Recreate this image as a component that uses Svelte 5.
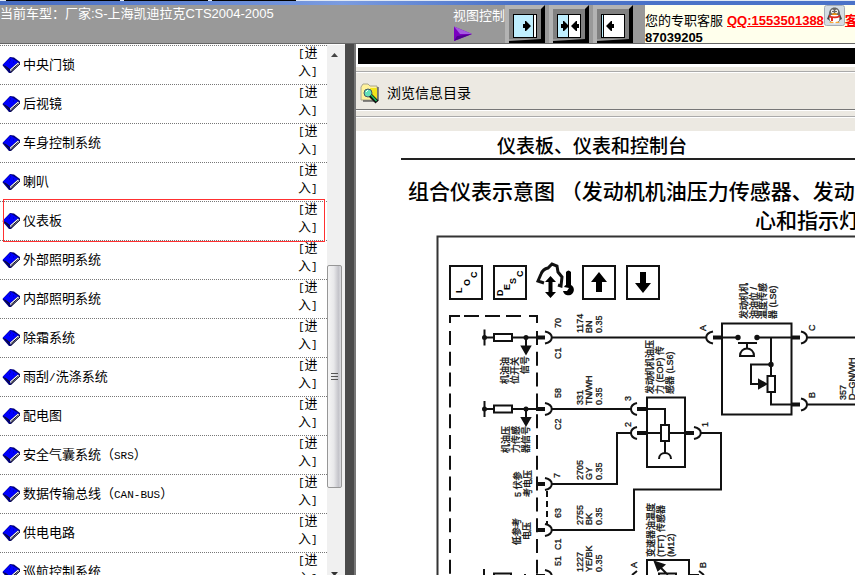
<script lang="ts">
  interface Label {
    x: number;
    y: number;
    text: string;
  }

  let items = [
    '中央门锁',
    '后视镜',
    '车身控制系统',
    '喇叭',
    '仪表板',
    '外部照明系统',
    '内部照明系统',
    '除霜系统',
    '雨刮/洗涤系统',
    '配电图',
    '安全气囊系统（SRS）',
    '数据传输总线（CAN-BUS）',
    '供电电路',
    '巡航控制系统'
  ];

  let selected = $state('仪表板');

  // labels on the drawing run bottom to top; x is the baseline, y the first letter
  const labels: Label[] = [
    { x: 561, y: 328, text: '70' },
    { x: 561, y: 359, text: 'C1' },
    { x: 583, y: 333, text: '1174' },
    { x: 592, y: 333, text: 'BN' },
    { x: 602, y: 333, text: '0.35' },
    { x: 561, y: 398, text: '58' },
    { x: 561, y: 430, text: 'C2' },
    { x: 583, y: 405, text: '331' },
    { x: 592, y: 405, text: 'TN/WH' },
    { x: 602, y: 405, text: '0.35' },
    { x: 560, y: 478, text: '7' },
    { x: 583, y: 480, text: '2705' },
    { x: 592, y: 480, text: 'GY' },
    { x: 602, y: 480, text: '0.35' },
    { x: 561, y: 518, text: '63' },
    { x: 583, y: 525, text: '2755' },
    { x: 592, y: 525, text: 'BK' },
    { x: 602, y: 525, text: '0.35' },
    { x: 561, y: 550, text: 'C1' },
    { x: 561, y: 566, text: '51' },
    { x: 583, y: 572, text: '1227' },
    { x: 592, y: 572, text: 'YE/BK' },
    { x: 602, y: 572, text: '0.35' },
    { x: 631, y: 401, text: '3' },
    { x: 631, y: 427, text: '2' },
    { x: 708, y: 427, text: '1' },
    { x: 706, y: 331, text: 'A' },
    { x: 815, y: 331, text: 'C' },
    { x: 815, y: 398, text: 'B' },
    { x: 846, y: 400, text: '357' },
    { x: 855, y: 400, text: 'D–GN/WH' },
    { x: 637, y: 568, text: 'A' },
    { x: 706, y: 568, text: 'B' },
    { x: 508, y: 384, text: '机油油' },
    { x: 518, y: 384, text: '位开关' },
    { x: 528, y: 374, text: '信号' },
    { x: 509, y: 453, text: '机油压' },
    { x: 519, y: 453, text: '力传感' },
    { x: 529, y: 453, text: '器信号' },
    { x: 521, y: 497, text: '5 伏参' },
    { x: 531, y: 497, text: '考电压' },
    { x: 520, y: 545, text: '低参考' },
    { x: 530, y: 540, text: '电压' },
    { x: 747, y: 319, text: '发动机机' },
    { x: 757, y: 319, text: '油油位 /' },
    { x: 766, y: 319, text: '温度传感' },
    { x: 776, y: 319, text: '器 (LS6)' },
    { x: 653, y: 394, text: '发动机机油压' },
    { x: 663, y: 394, text: '力 (EOP) 传' },
    { x: 673, y: 394, text: '感器 (LS6)' },
    { x: 654, y: 557, text: '变速器油温度' },
    { x: 664, y: 557, text: '(TFT) 传感器' },
    { x: 674, y: 557, text: '(M12)' }
  ];

  const views = [
    { name: '左侧展开', split: 21, fill: 21, right: 9, left: -1 },
    { name: '左右平分', split: 12, fill: 12, right: 3, left: 14 },
    { name: '右侧展开', split: 3, fill: 3, right: -1, left: 5 }
  ];

  // latin runs are set narrower than the ideographs
  function split(text: string) {
    return text.split(/([\x21-\x7e]+)/).filter(Boolean);
  }
</script>

{#snippet mixed(text: string)}{#each split(text) as part}{#if /^[\x21-\x7e]/.test(part)}<span class="latin">{part}</span>{:else}{part}{/if}{/each}{/snippet}

<div class="page">
  <div class="tabs"><i></i><i></i><i></i></div>
  <div class="stripe"></div>

  <header>
    <div class="car">当前车型：厂家:S-上海凯迪拉克CTS2004-2005</div>
    <div class="view-label">
      <span>视图控制</span>
      <svg width="20" height="16" viewBox="0 0 20 16">
        <path d="M1 0.500L19 8L1 15Z" fill="#7a00c0" />
        <path d="M1 0.500L19 8L7 8Z" fill="#a45ae0" />
        <path d="M1 15L19 8L4 10Z" fill="#500090" />
      </svg>
    </div>
    <div class="views">
      {#each views as view}
        <button aria-label={view.name}>
          <svg width="40" height="38" viewBox="0 0 40 38">
            <path d="M0 0H40L36 4H4V38H0Z" fill="#b3b3b3" />
            <path d="M4 4H36V34H4Z" fill="#808080" />
            <path d="M40 0V38H4V36L36 34V4Z" fill="#000" />
            <g transform="translate(8 9)">
              <rect x="0.500" y="0.500" width="23" height="23" fill="#fff" stroke="#000" />
              <rect x="1" y="1" width={view.fill - 1} height="22" fill="#bfefff" />
              <path d="M{view.split - 0.500} 0V24" stroke="#000" />
              {#if view.right >= 0}
                <path transform="translate({view.right + 1} 12)" d="M0 -2H2V-5H3L8 0L3 5H2V2H0Z" />
              {/if}
              {#if view.left >= 0}
                <path transform="translate({view.left} 12)" d="M8 -2H6V-5H5L0 0L5 5H6V2H8Z" />
              {/if}
            </g>
          </svg>
        </button>
      {/each}
    </div>
    <div class="contact">
      <div class="contact-line">
        <span class="service">您的专职客服</span>
        <a href="#qq">QQ:1553501388</a>
        <svg width="21" height="21" viewBox="0 0 21 21">
          <rect x="0.500" y="0.500" width="20" height="20" rx="2" fill="#d5dde3" stroke="#a5adb5" />
          <path d="M5 9L3 14L5 15L7 18H14L16 15L18 14L16 9Z" fill="#444" />
          <ellipse cx="10.500" cy="13.500" rx="5" ry="5" fill="#fff" />
          <path d="M5 10C4 0 17 0 16 10Z" fill="#666" />
          <ellipse cx="8.500" cy="6.500" rx="1.500" ry="2" fill="#fff" />
          <ellipse cx="12.500" cy="6.500" rx="1.500" ry="2" fill="#fff" />
          <circle cx="9" cy="6.500" r="0.700" />
          <circle cx="12" cy="6.500" r="0.700" />
          <path d="M7 9Q10.500 7.500 14 9Q10.500 11 7 9Z" fill="#f90" />
          <path d="M5 10Q10.500 13 16 10V12Q12 14 9 13V16H7V13L5 12Z" fill="#e02a20" />
          <path d="M5 18Q8 15 10 18ZM11 18Q13 15 16 18Z" fill="#fa3" />
        </svg>
        <a href="#service">客</a>
      </div>
      <strong>87039205</strong>
    </div>
  </header>

  <main>
    <nav>
      <ul>
        {#each items as item}
          <li class:selected={item === selected}>
            <svg width="19" height="18" viewBox="0 0 19 18">
              <path d="M0.500 9L8 1L12 1.500L18 6V8L9 17H7L1 10Z" fill="#00007a" />
              <path d="M1 8.500L8.500 1.500L16 6L8 13Z" fill="#00f" />
              <path d="M8 13.500L16 6.500L17.500 8L9 16Z" fill="#fff" />
              <path d="M3 10L8 14M8.500 16.500L18 8M9 14.500L16.500 8" stroke="#112" fill="none" />
              <path d="M8 4H9M11 6H12M7 6H8" stroke="#009" />
            </svg>
            <span class="name">{@render mixed(item)}</span>
            <a href="#enter" onclick={() => (selected = item)}>
              <span>{@render mixed('[进')}</span>
              <span>{@render mixed('入]')}</span>
            </a>
          </li>
        {/each}
      </ul>
      <div class="scrollbar">
        <svg class="arrow" width="7" height="4" viewBox="0 0 7 4"><path d="M0 4L3.500 0L7 4Z" fill="#444" /></svg>
        <div class="thumb"><i></i><i></i><i></i></div>
        <svg width="7" height="4" viewBox="0 0 7 4"><path d="M0 0H7L3.500 4Z" fill="#333" /></svg>
      </div>
    </nav>
    <div class="divider"></div>

    <section>
      <div class="banner"></div>
      <div class="rule"></div>
      <div class="toolbar">
        <svg width="19" height="21" viewBox="0 0 19 21">
          <path d="M1 4L3 1H8L10 3H17V17H1Z" fill="#fff29a" stroke="#aaa68e" />
          <path d="M10 5H17V17L12 14Z" fill="#f2e51b" />
          <path d="M18 4V18H3" stroke="#222" fill="none" />
          <circle cx="8" cy="10" r="4" fill="#62e0b8" stroke="#456" />
          <path d="M6 9L8 7" stroke="#fff" />
          <path d="M10.500 12.500L17 19" stroke="#111" stroke-width="4" />
          <path d="M11 12L16.500 18" stroke="#1dc765" stroke-width="1.500" />
        </svg>
        <h1>浏览信息目录</h1>
      </div>
      <div class="gap"></div>
      <div class="gap low"></div>

      <article>
        <h2>仪表板、仪表和控制台</h2>
        <h3>组合仪表示意图 （发动机机油压力传感器、发动机<br /><span>心和指示灯</span></h3>

        <svg class="diagram" width="419" height="340" viewBox="436 235 419 340">
          <path d="M437.500 575V236.500H855" class="frame" />
          <g class="box">
            <rect x="450" y="266" width="32" height="33" />
            <rect x="494" y="266" width="32" height="33" />
            <rect x="583" y="266" width="32" height="33" />
            <rect x="627" y="266" width="32" height="33" />
          </g>
          <g class="letters">
            {#each [[462, 293, 'L'], [470, 286, 'O'], [477, 278, 'C'], [503, 296, 'D'], [510, 290, 'E'], [516, 284, 'S'], [523, 277, 'C']] as [x, y, letter]}
              <text transform="translate({x} {y}) rotate(-90)">{letter}</text>
            {/each}
          </g>
          <path d="M599 272L607 282H602V292H596V282H591Z" />
          <path d="M643 293L635 283H640V272H646V283H651Z" />
          <path class="wire car-outline" d="M544 283L538 281L541 274Q543 269 548 268L552 264L557 266L558 272L562 277L561 286L558 285" />
          <path d="M550.500 276L556 282H552.500V292H556L550.500 298L545 292H548.500V282H545Z" />
          <path d="M566 272Q568.500 269 571 272V285A5.500 5.500 0 1 1 563 291L567 291L569 288L564 287Q565 285 566 285Z" />

          <path class="dash" d="M450 331V575" />
          <path class="dash" d="M537 331V575" />
          <path class="edge" d="M450 323V316H460M464 316H479M485 316H500M506 316H521M529 316H537V323" />

          <g class="wire">
            {#each [337.5, 409] as y}
              <g transform="translate(0 {y})">
                <path d="M484.500 -8V8M484.500 0H494M512 0H537M526 0V10" />
                <rect x="494" y="-3.500" width="18" height="7" />
                <circle class="dot" cx="484.500" cy="0" r="1.500" />
                <circle class="dot" cx="526" cy="0" r="1.500" />
                <path class="dot" d="M522 9H530L526 16Z" />
              </g>
            {/each}
            <path d="M484 569V575M494 575V573.500H511V575M524 575H526" />
            {#each [337.5, 409, 484, 530, 576] as y}
              <path d="M545 {y - 6}C554 {y - 4} 554 {y + 4} 545 {y + 6}" />
              <path class="pin" d="M536 {y}H545" />
            {/each}
            <path d="M552 337.500H706M552 409H631M552 484H617V433H631M552 530H634V489.500H721V433H701" />
            <path class="link" d="M547 491V525" />

            <path d="M713 331.500C704 333.500 704 341.500 713 343.500" />
            <path class="pin" d="M713 337.500H722" />
            <rect x="722" y="323.500" width="69.500" height="91" />
            <path d="M722 337.500H738M757 337.500H792M738 343H757M747 343V348M740 356C740 346 754 346 754 356Z" />
            <path d="M771 337.500V376M771 392V404.500H792M771 364.500H751V384H760" />
            <rect x="767.500" y="376" width="7.500" height="16" />
            <circle class="dot" cx="738" cy="337.500" r="1.700" />
            <circle class="dot" cx="757" cy="337.500" r="1.700" />
            <circle class="dot" cx="771" cy="364.500" r="1.700" />
            <path class="dot" d="M759 380L766 384L759 388Z" />
            {#each [337.5, 404.5] as y}
              <path d="M801 {y - 6}C809 {y - 4} 809 {y + 4} 801 {y + 6}M807 {y}H855" />
              <path class="pin" d="M792 {y}H800" />
            {/each}

            <rect x="647" y="397.500" width="38" height="69.500" />
            <path d="M647 409H665V425M647 433H661M669 433H685M665 441V453M659 459C659 451 671 451 671 459" />
            <rect x="661" y="425" width="8" height="16" />
            {#each [409, 433] as y}
              <path d="M637 {y - 6}C629 {y - 4} 629 {y + 4} 637 {y + 6}" />
              <path class="pin" d="M637 {y}H647" />
            {/each}
            <path d="M694 427C703 429 703 437 694 439" />
            <path class="pin" d="M685 433H694" />

            <path d="M647 575V560H689V575M659 575V573.500H676V575M657 564L668 575M637 571L632 575M689 575H699M699 571L704 575" />
            <path class="dot" d="M655 562L664 565L658 570Z" />
          </g>

          <g class="labels">
            {#each labels as label}
              <text transform="translate({label.x} {label.y}) rotate(-90)">{label.text}</text>
            {/each}
          </g>
        </svg>
      </article>
    </section>
  </main>
</div>

<style>
  :global(body) {
    margin: 0;
  }

  .page {
    display: flex;
    flex-direction: column;
    height: 100vh;
    overflow: hidden;
    background: #fff;
    color: #000;
    font-family: 'Liberation Sans', 'Noto Sans CJK SC', sans-serif;
    font-size: 13px;
  }

  .tabs {
    display: flex;
    flex: none;
    gap: 4px;
    height: 1px;
    padding-left: 6px;
    background: #dfe8f5;
  }

  .tabs i {
    width: 84px;
    background: #000;
  }

  .tabs i:first-child {
    width: 114px;
  }

  .stripe {
    flex: none;
    height: 4px;
    background: linear-gradient(90deg, #4369c0, #7a9be0 40%, #4a72c8 60%);
  }

  header {
    display: grid;
    flex: none;
    grid-template-columns: 453px 52px 140px 1fr;
    height: 38px;
    background: #999;
    border-bottom: 1px solid #666;
  }

  .car {
    color: #fff;
    line-height: 17px;
    white-space: nowrap;
  }

  .view-label {
    display: flex;
    flex-direction: column;
    color: #fff;
    line-height: 21px;
    white-space: nowrap;
  }

  .views {
    display: flex;
    gap: 4px;
    overflow: hidden;
  }

  .views button {
    flex: none;
    width: 40px;
    height: 38px;
    padding: 0;
    border: 0;
    background: none;
    cursor: pointer;
  }

  svg {
    display: block;
    flex: none;
  }

  .contact {
    overflow: hidden;
    background: #ffffec;
    white-space: nowrap;
  }

  .contact-line {
    display: flex;
    height: 24px;
  }

  .contact-line span,
  .contact-line a {
    flex: none;
    padding-top: 8px;
    line-height: 16px;
  }

  .contact-line a {
    color: #f00;
    font-weight: bold;
  }

  .contact .service {
    width: 82px;
  }

  .contact strong {
    display: block;
    line-height: 18px;
  }

  main {
    display: grid;
    flex: 1;
    grid-template-columns: 345px 9px 1fr;
    min-height: 0;
  }

  nav {
    display: flex;
    min-width: 0;
    min-height: 0;
    padding-top: 1px;
  }

  ul {
    flex: 1;
    margin: 0;
    padding: 0;
    overflow: hidden;
    list-style: none;
  }

  li {
    position: relative;
    display: flex;
    align-items: center;
    height: 38px;
    padding-left: 2px;
    border-top: 1px dotted #777;
  }

  li.selected::after {
    position: absolute;
    z-index: 1;
    inset: -3px 2px -2px 3px;
    border: 1px solid #ff3030;
    content: '';
    pointer-events: none;
  }

  .name {
    flex: 1;
    padding: 0 0 4px 2px;
  }

  .latin {
    font-family: 'Liberation Mono', monospace;
    font-size: 11px;
    line-height: 1;
  }

  li a {
    width: 20px;
    margin-right: 9px;
    padding-bottom: 6px;
    color: #000;
    line-height: 18px;
    text-decoration: none;
    white-space: nowrap;
  }

  li a > span {
    display: block;
    height: 18px;
  }

  .scrollbar {
    display: flex;
    flex: none;
    flex-direction: column;
    align-items: center;
    width: 15px;
    padding-right: 3px;
    background: #f0f0f0;
  }

  .arrow {
    margin: 8px 0 208px;
  }

  .thumb {
    display: flex;
    flex: none;
    flex-direction: column;
    align-items: center;
    justify-content: center;
    gap: 2px;
    box-sizing: border-box;
    width: 15px;
    height: 223px;
    margin-bottom: 84px;
    border: 1px solid #979797;
    border-radius: 2px;
    background: linear-gradient(90deg, #f5f5f5, #e8e8ea 45%, #c4c4ca 80%, #dcdce0);
  }

  .thumb i {
    width: 7px;
    height: 1px;
    background: #555;
  }

  .divider {
    background: #4b4b4b;
  }

  section {
    min-width: 0;
    overflow: hidden;
    border-left: 2px solid #777;
    background: #ece9e2;
  }

  .banner {
    height: 16px;
    border: solid #fff;
    border-width: 4px 0 3px 2px;
    background: #000;
  }

  .rule {
    height: 4px;
    border-bottom: 1px solid #aaa;
  }

  .toolbar {
    display: flex;
    align-items: center;
    gap: 8px;
    height: 32px;
    padding: 4px 0 0 4px;
    border-top: 1px solid #fff;
    border-bottom: 1px solid #777;
  }

  h1 {
    margin: 0;
    font-size: 14px;
    font-weight: 400;
    line-height: 20px;
  }

  .gap {
    height: 5px;
    border-top: 1px solid #fff;
    border-bottom: 1px solid #aaa;
  }

  .gap.low {
    height: 13px;
    border-bottom: 0;
  }

  article {
    background: #fff;
    white-space: nowrap;
  }

  h2 {
    margin: 0 0 0 45px;
    padding: 4px 0 0 96px;
    border-bottom: 2px solid #222;
    font-size: 19px;
    font-weight: 500;
    line-height: 23px;
  }

  h3 {
    margin: 0;
    padding: 17px 0 0 52px;
    font-size: 21px;
    font-weight: 500;
    line-height: 29px;
  }

  h3 span {
    padding-left: 347px;
  }

  .diagram {
    margin-left: 80px;
  }

  .frame {
    fill: none;
    stroke: #333;
    stroke-width: 2;
  }

  .box {
    fill: none;
    stroke: #111;
    stroke-width: 2;
  }

  .letters {
    font-size: 9px;
    font-weight: bold;
  }

  .wire {
    fill: none;
    stroke: #111;
    stroke-width: 2;
  }

  .car-outline {
    stroke-width: 3;
  }

  .wire .dot {
    fill: #111;
  }

  .wire .pin {
    stroke-width: 4;
  }

  .wire .link {
    stroke-dasharray: 6 4;
  }

  .dash,
  .edge {
    fill: none;
    stroke: #111;
    stroke-width: 2;
  }

  .dash {
    stroke-dasharray: 14 6.8;
  }

  .labels {
    fill: #111;
    stroke: #111;
    stroke-width: 0.3;
    font-size: 9px;
  }
</style>
